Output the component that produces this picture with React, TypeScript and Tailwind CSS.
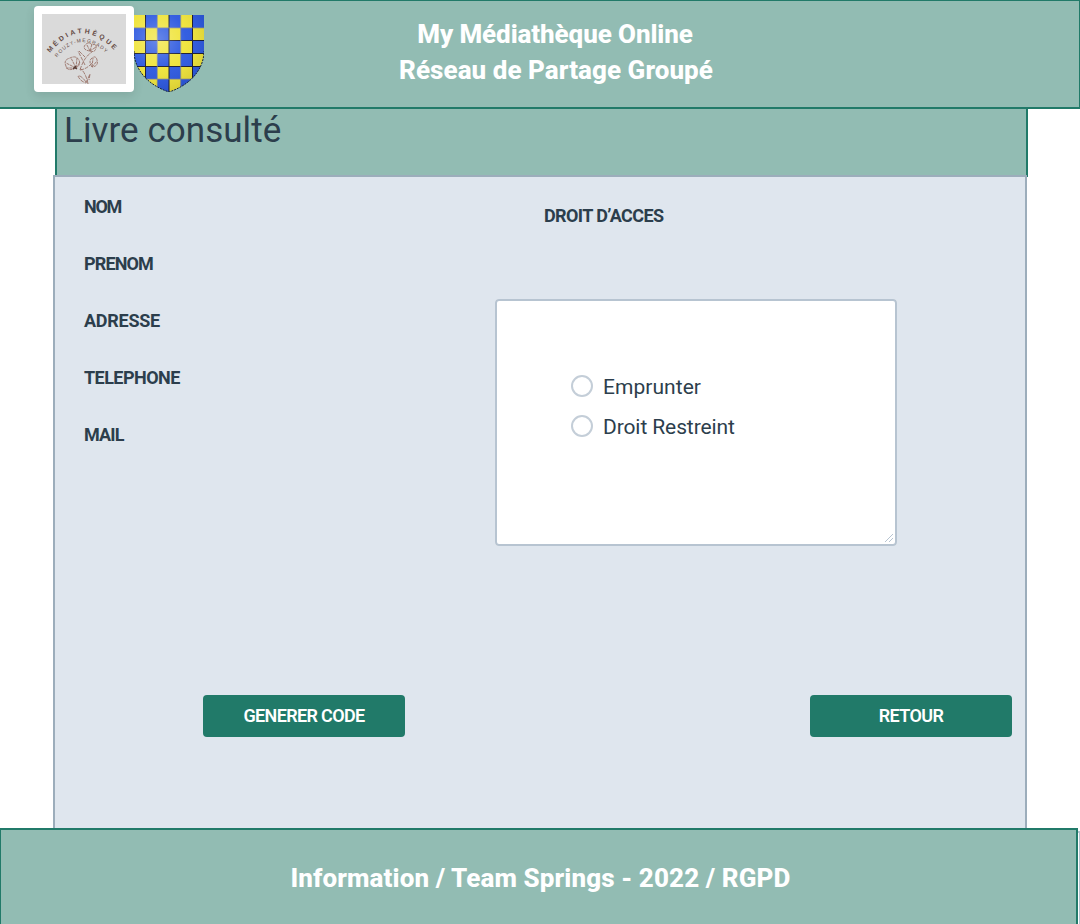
const LABELS = [
  { text: "NOM", tracking: "tracking-[-1.3px]" },
  { text: "PRENOM", tracking: "tracking-[-0.85px]" },
  { text: "ADRESSE", tracking: "tracking-[-0.25px]" },
  { text: "TELEPHONE", tracking: "tracking-[-0.55px]" },
  { text: "MAIL", tracking: "tracking-[-0.85px]" },
];
const CHOICES = [
  { label: "Emprunter", tracking: "tracking-[0.05px]" },
  { label: "Droit Restreint", tracking: "tracking-[-0.1px]" },
];

function LibraryLogo() {
  return (
    <div className="h-[86px] w-[100px] rounded-[4px] bg-white p-2 shadow-[0_4px_10px_rgba(40,60,60,0.14)]">
      <svg viewBox="0 0 84 70" className="h-[70px] w-[84px] bg-[#dadada]" fill="none" stroke="#9a7369" strokeWidth="0.9">
        <defs>
          <path id="arc-outer" d="M8 39 Q39 0 74 38" />
          <path id="arc-inner" d="M15 43.5 Q39 14 66 41" />
        </defs>
        <g fill="#654b45" stroke="none" fontFamily="Liberation Sans, sans-serif">
          <text fontSize="6.8" fontWeight="bold">
            <textPath href="#arc-outer" textLength="76">MÉDIATHÈQUE</textPath>
          </text>
          <text fontSize="5">
            <textPath href="#arc-inner" textLength="57">ROUZY-MEGRADY</textPath>
          </text>
        </g>
        <path d="M46 70 Q44 59 38 54 M38 56 Q42 43 50 38 M43 51 L36 37 M37 37 L43 43 M38 56 Q45 55 50 49 M44 68 Q39 61 36 62 Q38 67 44 69 M44 69 L48 60 L47 66" strokeDasharray="4 1" />
        <path d="M34 54 Q25 58 24 52 Q21 46 28 44 Q34 41 37 46 Q39 51 34 54 Z M34 54 L24 49 M34 54 L29 44 M34 54 L35 44 M34 54 L38 48 M34 54 L24 54" strokeDasharray="3 0.7" />
        <path d="M48 37 Q40 36 43 31 Q47 27 50 31 Q55 29 54 34 Q53 39 48 37 Z M48 37 L45 31 M48 37 L50 30 M48 37 L54 33" strokeDasharray="3 0.7" />
        <path d="M50 53 Q46 47 50 44 Q54 41 55 46 Q57 52 50 53 Z M50 53 L51 44 M50 53 L55 47" strokeDasharray="3 0.7" />
        <path d="M31 55 L34 52 M32 53 L35 55" stroke="#573d37" strokeWidth="1.4" />
      </svg>
    </div>
  );
}

const COLUMNS = [0, 11.7, 23.3, 35, 46.7, 58.4];
const ROWS = [0, 12.9, 25.7, 38.5, 51.3, 64.1];

function Shield() {
  return (
    <svg viewBox="0 0 70 77" className="mt-[9px] h-[77px] w-[70px]">
      <defs>
        <clipPath id="shield-shape">
          <path d="M0 0 H70 V36 C70 52 59 69 35 77 C11 69 0 52 0 36 Z" />
        </clipPath>
        <radialGradient id="shine" gradientUnits="userSpaceOnUse" cx="23" cy="25" r="58">
          <stop offset="0" stopColor="white" stopOpacity="0.3" />
          <stop offset="0.5" stopColor="white" stopOpacity="0.06" />
          <stop offset="1" stopColor="black" stopOpacity="0.12" />
        </radialGradient>
      </defs>
      <g clipPath="url(#shield-shape)">
        {ROWS.map((y, r) =>
          COLUMNS.map((x, c) => (
            <rect key={`${r}-${c}`} x={x} y={y} width="11.8" height="13" fill={(r + c) % 2 ? "#2855df" : "#efe335"} />
          ))
        )}
        <path d="M11.5 0V77 M35 0V77 M58.5 0V77 M0 25.5H70 M0 38.5H70 M0 51.5H70" stroke="#15162b" strokeWidth="1" />
        <path d="M23.3 0V77 M46.7 0V77 M0 12.9H70 M0 64.1H70" stroke="#7e8190" strokeWidth="0.7" />
        <rect width="70" height="77" fill="url(#shine)" />
      </g>
      <path d="M0 36 C0 52 11 69 35 77 C59 69 70 52 70 36" fill="none" stroke="#14203a" strokeWidth="1" strokeDasharray="2 1" />
    </svg>
  );
}

function ActionButton({ children }: { children: string }) {
  return (
    <button className="h-[42px] w-[202px] rounded-[4px] bg-[#217a69] text-[18px] leading-[42px] font-semibold tracking-[-0.65px] text-white">
      {children}
    </button>
  );
}

export default function App() {
  return (
    <div className="flex h-[924px] w-[1080px] flex-col overflow-hidden bg-white font-['Roboto','Open_Sans',sans-serif] text-[#2c3e4c]">
      <header className="flex h-[109px] shrink-0 border-t border-r border-b-2 border-[#217a69] bg-[#92bcb3] pt-[5px] pl-[34px]">
        <LibraryLogo />
        <Shield />
        <h1 className="ml-[192px] w-[318px] pt-[10px] text-center text-[26px] leading-9 font-extrabold whitespace-nowrap text-white">
          <span className="block tracking-[-0.1px]">My Médiathèque Online</span>
          <span className="ml-[2px] block tracking-[0.05px]">Réseau de Partage Groupé</span>
        </h1>
      </header>

      <section className="ml-[55px] h-[68px] w-[973px] shrink-0 border-x-2 border-[#217a69] bg-[#92bcb3] pl-[7px]">
        <h2 className="text-[35px] leading-[44px] font-normal tracking-[0.05px]">Livre consulté</h2>
      </section>

      <main className="relative -mt-[2px] ml-[53px] flex h-[653px] w-[974px] shrink-0 flex-col border-x-2 border-t-2 border-[#9cadbb] bg-[#dfe6ee]">
        <div className="flex h-[518px] shrink-0">
          <div className="w-[440px] pt-[1px] pl-[29px]">
            {LABELS.map(({ text, tracking }) => (
              <div key={text} className="h-[57px] text-[18px] leading-[57px] font-bold">
                <span className={tracking}>{text}</span>
              </div>
            ))}
          </div>
          <div>
            <h3 className="ml-[49px] pt-[27px] text-[18px] leading-6 font-bold tracking-[-0.6px]">DROIT D’ACCES</h3>
            <fieldset className="relative mt-[71px] flex h-[247px] w-[402px] flex-col rounded-[4px] border-2 border-[#b7c4d1] bg-white pt-[65px] pl-[74px]">
              {CHOICES.map(({ label, tracking }) => (
                <label key={label} className="flex h-10 items-center gap-[10px] text-[21px] leading-[38px]">
                  <input type="radio" name="access" className="h-[22px] w-[22px] appearance-none rounded-full border-2 border-[#c4ced8] bg-white" />
                  <span className={`pt-[2px] ${tracking}`}>{label}</span>
                </label>
              ))}
              <svg className="absolute right-[1px] bottom-[1px] h-[10px] w-[10px]" viewBox="0 0 10 10" fill="none" stroke="#b7c4d1" strokeWidth="1">
                <path d="M1 9 L9 1 M5 9 L9 5" />
              </svg>
            </fieldset>
          </div>
        </div>
        <div className="flex justify-between pr-[13px] pl-[148px]">
          <ActionButton>GENERER CODE</ActionButton>
          <ActionButton>RETOUR</ActionButton>
        </div>
      </main>

      <div className="flex h-[96px] shrink-0">
        <footer className="w-[1078px] border-t-2 border-r-2 border-l border-[#217a69] bg-[#92bcb3] pt-[30px] pl-[4px] text-center text-[26px] leading-9 font-extrabold tracking-[0.1px] text-white">
          Information / Team Springs - 2022 / RGPD
        </footer>
        <div className="mt-[3px] w-[2px] border-t-2 border-r border-[#b7c4d1]" />
      </div>
    </div>
  );
}
